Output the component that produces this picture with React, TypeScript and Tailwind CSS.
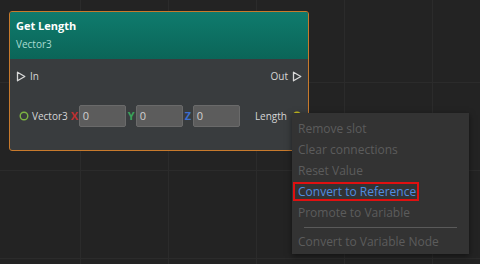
const font = { fontFamily: '"Open Sans", "Noto Sans", sans-serif' };

const Tri = () => (
  <svg width="10" height="11" viewBox="0 0 10 11" className="shrink-0">
    <path d="M1.5 1.2 L8.8 5.5 L1.5 9.8 Z" fill="none" stroke="#d8d8d8" strokeWidth="1.3" strokeLinejoin="round" />
  </svg>
);

const Ring = ({ color }: { color: string }) => (
  <svg width="10" height="10" viewBox="0 0 10 10" className="shrink-0">
    <circle cx="5" cy="5" r="3.8" fill="none" stroke={color} strokeWidth="1.4" />
  </svg>
);

const Field = ({ label, color }: { label: string; color: string }) => (
  <div className="flex items-center">
    <span className={`w-[8px] text-[11px] font-bold ${color}`}>{label}</span>
    <div className="flex h-[22px] w-[47px] items-center rounded-[2px] border border-[#6a6a6a] bg-[#5c5c5c] pl-[3px] text-[11px] text-[#d0d0d0]">
      0
    </div>
  </div>
);

const MenuItem = ({ text, active }: { text: string; active?: boolean }) => (
  <div
    className={`mx-[1px] flex h-[19px] items-center whitespace-nowrap px-[3px] text-[12px] ${
      active ? 'border-2 border-[#e01010] text-[#4f8de0]' : 'border-2 border-transparent text-[#5c5c5c]'
    }`}
  >
    {text}
  </div>
);

const App = () => {
  return (
    <div
      className="relative h-[264px] w-[480px] overflow-hidden bg-[#232323] bg-[linear-gradient(to_right,#2b2b2b_1px,transparent_1px),linear-gradient(to_bottom,#2b2b2b_1px,transparent_1px)] bg-[size:88px_88px] bg-[position:80px_82px] pl-[9px] pt-[11px]"
      style={font}
    >
      {/* Node */}
      <div className="w-[300px] overflow-hidden rounded-[3px] border border-[#c87a2c] bg-[#393c3e]">
        <div className="h-[47px] bg-[linear-gradient(to_bottom,#0f7b6d,#0b6558)] px-[6px] pt-[6px]">
          <div className="text-[11px] font-bold leading-[15px] text-white">Get Length</div>
          <div className="mt-[5px] text-[10px] leading-[13px] text-[#a9dcd2]">Vector3</div>
        </div>
        <div className="px-[6px] pb-[23px] pt-[10px] text-[10px] text-[#d6d6d6]">
          <div className="flex h-[15px] items-center justify-between">
            <div className="flex items-center gap-[4px]">
              <Tri />
              <span>In</span>
            </div>
            <div className="flex items-center gap-[4px]">
              <span>Out</span>
              <Tri />
            </div>
          </div>
          <div className="mt-[21px] flex h-[22px] items-center">
            <div className="ml-[3px] flex items-center gap-[3px]">
              <Ring color="#7cb342" />
              <span>Vector3</span>
            </div>
            <div className="ml-[3px] flex items-center gap-[2px]">
              <Field label="X" color="text-[#c03030]" />
              <Field label="Y" color="text-[#3aa35a]" />
              <Field label="Z" color="text-[#3d6fd0]" />
            </div>
            <div className="ml-auto flex items-center gap-[5px]">
              <span>Length</span>
              <Ring color="#c8c020" />
            </div>
          </div>
        </div>
      </div>

      {/* Context menu */}
      <div className="absolute left-[292px] top-[113px] w-[177px] bg-[#333333] pb-[3px] pt-[6px] shadow-[0_2px_6px_rgba(0,0,0,0.5)]" style={font}>
        <div className="flex flex-col gap-[2px]">
          <MenuItem text="Remove slot" />
          <MenuItem text="Clear connections" />
          <MenuItem text="Reset Value" />
          <div className="w-[128px]">
            <MenuItem text="Convert to Reference" active />
          </div>
          <MenuItem text="Promote to Variable" />
        </div>
        <div className="mx-[12px] mb-[4px] mt-[5px] h-px bg-[#5a5a5a]" />
        <MenuItem text="Convert to Variable Node" />
      </div>
    </div>
  );
};

export default App;
